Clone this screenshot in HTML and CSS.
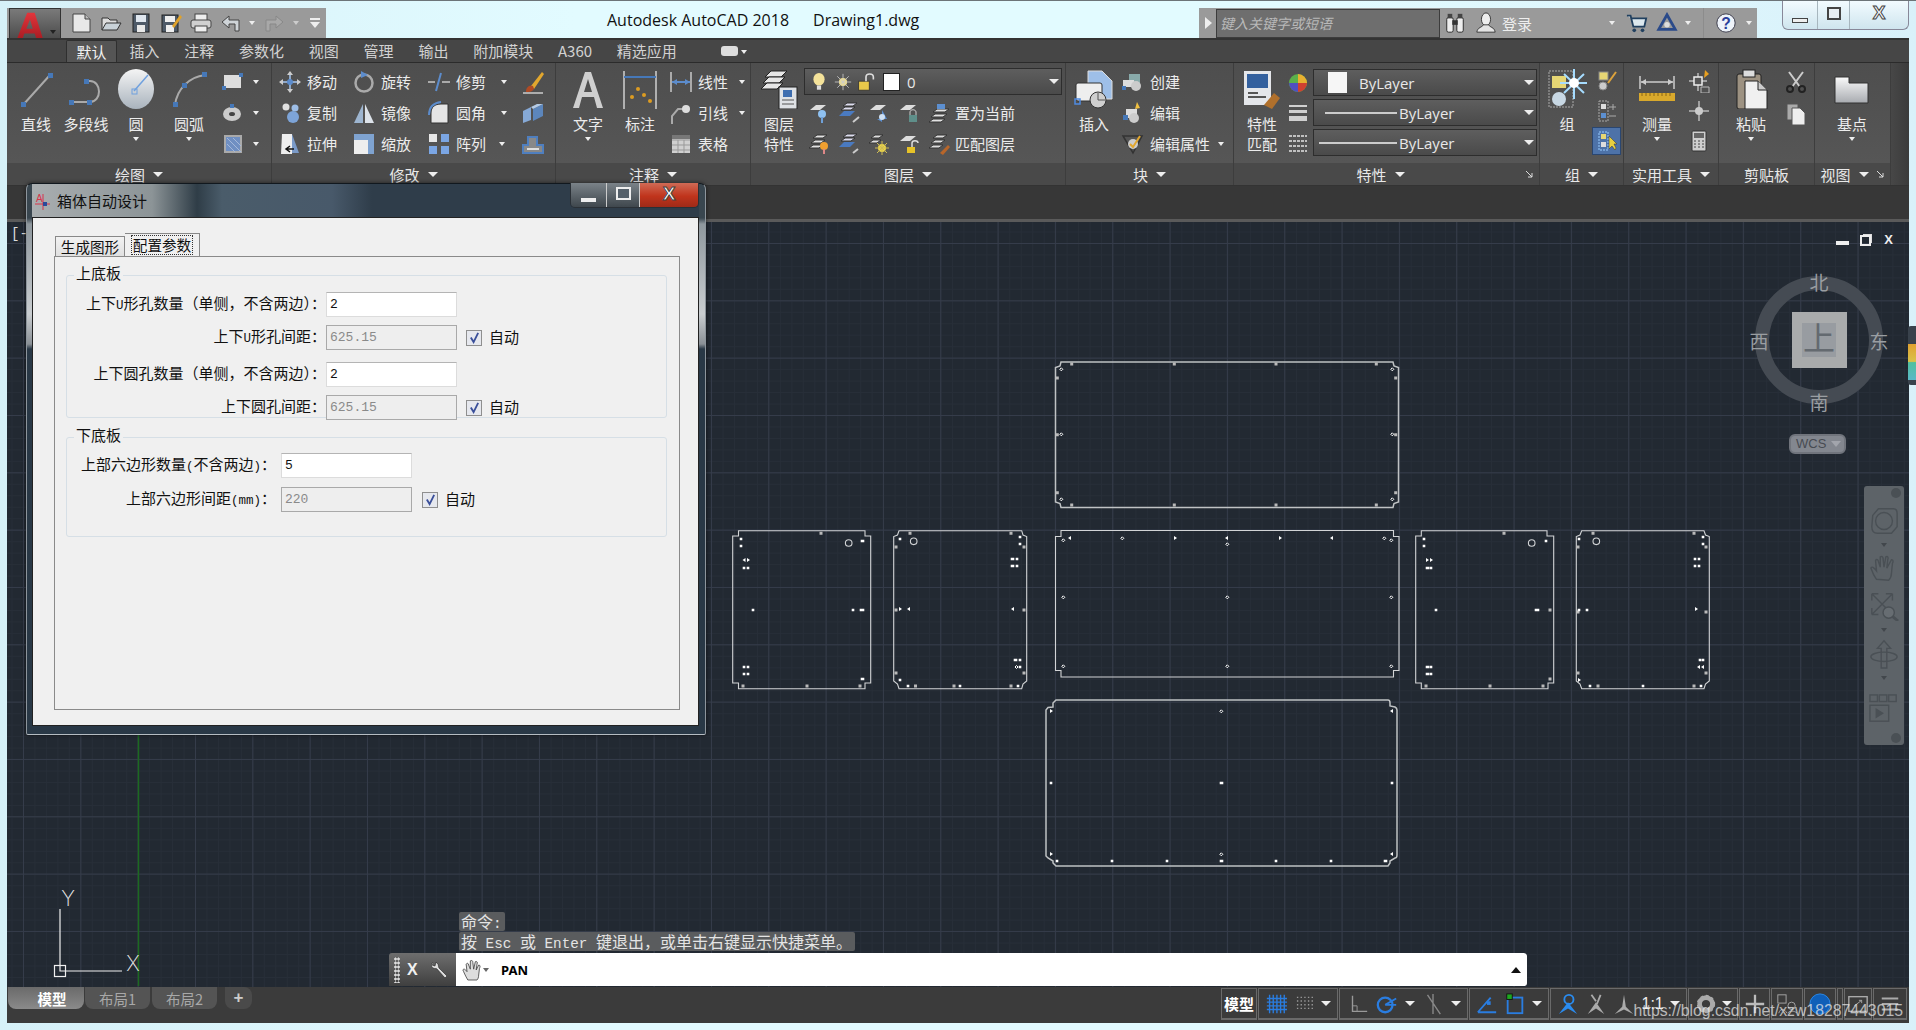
FILE: index.html
```html
<!DOCTYPE html>
<html lang="zh-CN">
<head>
<meta charset="utf-8">
<title>Autodesk AutoCAD 2018</title>
<link rel="stylesheet" href="styles.css">
</head>
<body>
<div class="window">

<header class="titlebar">
  <div class="qat">
    <div class="appbtn"><svg class="appA" viewBox="0 0 30 30"><defs><linearGradient id="ag" x1="0" y1="0" x2="0" y2="1"><stop offset="0" stop-color="#e2353c"/><stop offset="1" stop-color="#a81c22"/></linearGradient></defs><path d="M1 30 L12 2 H20 L29 30 H22 L20 24 H9 L7 30Z M11 19 H18 L15 9Z" fill="url(#ag)" fill-rule="evenodd"/></svg><i class="arr dark appArr"></i></div>
    <div class="qicons">
      <svg class="q" viewBox="0 0 22 22"><path d="M3 2H15L20 7V20H3Z" fill="#e8e8e8" stroke="#444"/><path d="M15 2V7H20" fill="#bbb" stroke="#444"/></svg>
      <svg class="q" viewBox="0 0 22 22"><path d="M2 18V6H8L10 8H17V11" fill="#ddd" stroke="#333"/><path d="M2 18L6 11H21L17 18Z" fill="#c9d2d8" stroke="#333"/></svg>
      <svg class="q" viewBox="0 0 22 22"><rect x="3" y="2" width="16" height="18" fill="#4e5a68" stroke="#222"/><rect x="6" y="3" width="10" height="7" fill="#dfe6ee"/><rect x="7" y="13" width="8" height="7" fill="#e8e8e8"/></svg>
      <svg class="q" viewBox="0 0 22 22"><rect x="2" y="3" width="16" height="17" fill="#4e5a68" stroke="#222"/><rect x="5" y="4" width="10" height="6" fill="#eee"/><rect x="6" y="13" width="8" height="7" fill="#eee"/><path d="M12 14L20 3L22 5L14 16Z" fill="#e0a22a"/></svg>
      <svg class="q" viewBox="0 0 22 22"><rect x="5" y="2" width="12" height="7" fill="#eee" stroke="#444"/><rect x="1" y="8" width="20" height="8" rx="2" fill="#d0d0d0" stroke="#444"/><rect x="5" y="14" width="12" height="6" fill="#eee" stroke="#444"/></svg>
      <svg class="q" viewBox="0 0 22 22"><path d="M9 4L2 10L9 16V12H15V19H19V8H9Z" fill="#cfd4d8" stroke="#444"/></svg>
      <i class="arr qa1"></i>
      <svg class="q qr" viewBox="0 0 22 22"><path d="M13 4L20 10L13 16V12H7V19H3V8H13Z" fill="#a8a8a8" stroke="#888"/></svg>
      <i class="arr qa2"></i>
      <svg class="qc" viewBox="0 0 12 12"><rect x="1" y="1" width="10" height="2" fill="#eee"/><path d="M1 5H11L6 11Z" fill="#eee"/></svg>
    </div>
  </div>
  <div class="wtitle"><span>Autodesk AutoCAD 2018</span><span>Drawing1.dwg</span></div>
  <div class="infocenter">
    <i class="tri-r"></i>
    <div class="search">键入关键字或短语</div>
    <svg class="ic24 m1" viewBox="0 0 24 24"><rect x="3" y="6" width="7" height="16" rx="2" fill="#eee" stroke="#222"/><rect x="14" y="6" width="7" height="16" rx="2" fill="#eee" stroke="#222"/><rect x="9" y="9" width="6" height="5" fill="#333"/><rect x="4" y="2" width="5" height="5" fill="#444"/><rect x="15" y="2" width="5" height="5" fill="#444"/></svg>
    <svg class="ic24 m2" viewBox="0 0 24 24"><ellipse cx="12" cy="8" rx="5" ry="7" fill="#eee" stroke="#333"/><path d="M2 22C3 16 8 17 9 14H15C16 17 21 16 22 22Z" fill="#e4e4e4" stroke="#333"/></svg>
    <span class="login">登录</span>
    <i class="arr a1"></i>
    <svg class="ic24 m3" viewBox="0 0 24 24"><path d="M1 4H5L8 16H20L22 7H6" fill="#dce8ee" stroke="#21405f" stroke-width="2"/><circle cx="9" cy="20" r="2" fill="#21405f"/><circle cx="18" cy="20" r="2" fill="#21405f"/></svg>
    <svg class="ic24 m4" viewBox="0 0 24 24"><path d="M12 3L21 19H3Z" fill="none" stroke="#2a4a8a" stroke-width="3"/><circle cx="12" cy="14" r="3" fill="#ddd"/></svg>
    <i class="arr a2"></i>
    <i class="isep"></i>
    <svg class="ic24 m5" viewBox="0 0 24 24"><circle cx="12" cy="12" r="10" fill="#eef3fa" stroke="#334"/><text x="12" y="18" class="helpq">?</text></svg>
    <i class="arr a3"></i>
  </div>
  <div class="wbtns">
    <div class="wb w1"><i class="wmin"></i></div>
    <div class="wb w2"><i class="wmax"></i></div>
    <div class="wb w3"><span>X</span></div>
  </div>
</header>

<div class="app">
  <nav class="tabs">
    <span class="tab on">默认</span><span class="tab">插入</span><span class="tab">注释</span><span class="tab">参数化</span><span class="tab">视图</span><span class="tab">管理</span><span class="tab">输出</span><span class="tab">附加模块</span><span class="tab">A360</span><span class="tab">精选应用</span>
    <span class="pill"><i class="arr up"></i></span><i class="arr pa"></i>
  </nav>

  <div class="ribbon">
    <section class="panel p-draw">
      <div class="pbody">
        <div class="big w50"><svg class="bi" viewBox="0 0 40 40"><path d="M7 36L34 6" stroke="#aaa" stroke-width="2"/><rect x="5" y="33" width="5" height="5" fill="#4678b8"/><rect x="32" y="4" width="5" height="5" fill="#4678b8"/></svg><span>直线</span></div>
        <div class="big w50"><svg class="bi" viewBox="0 0 40 40"><path d="M6 33H24C36 33 36 12 24 12H20" fill="none" stroke="#aaa" stroke-width="2"/><g fill="#4678b8"><rect x="3" y="31" width="5" height="5"/><rect x="21" y="31" width="5" height="5"/><rect x="18" y="10" width="5" height="5"/></g></svg><span>多段线</span></div>
        <div class="big w50"><svg class="bi" viewBox="0 0 40 40"><defs><linearGradient id="cg" x1="0" y1="0" x2="0" y2="1"><stop offset="0" stop-color="#f4f4f4"/><stop offset="1" stop-color="#a9b3bd"/></linearGradient></defs><ellipse cx="20" cy="20" rx="18" ry="20" fill="url(#cg)"/><path d="M18 22L32 6" stroke="#6fa0de" stroke-width="1.5"/><rect x="16" y="20" width="5" height="5" fill="none" stroke="#6fa0de"/></svg><span>圆</span><i class="arr"></i></div>
        <div class="big w56"><svg class="bi" viewBox="0 0 40 40"><path d="M6 36C8 20 20 8 36 6" fill="none" stroke="#aaa" stroke-width="2"/><g fill="#4678b8"><rect x="4" y="33" width="5" height="5"/><rect x="33" y="3" width="5" height="5"/><rect x="13" y="14" width="5" height="5"/></g></svg><span>圆弧</span><i class="arr"></i></div>
        <div class="col">
          <div class="tool t1"><svg class="si" viewBox="0 0 24 24"><rect x="3" y="5" width="17" height="13" fill="#ddd"/><rect x="1" y="16" width="4" height="4" fill="#4678b8"/><rect x="18" y="3" width="4" height="4" fill="#4678b8"/></svg><i class="arr ml8"></i></div>
          <div class="tool t1"><svg class="si" viewBox="0 0 24 24"><ellipse cx="11" cy="13" rx="9" ry="7" fill="#ccc"/><ellipse cx="11" cy="13" rx="3" ry="2" fill="#444"/><rect x="9" y="3" width="4" height="4" fill="#4678b8"/></svg><i class="arr ml8"></i></div>
          <div class="tool t1"><svg class="si" viewBox="0 0 24 24"><rect x="4" y="4" width="16" height="16" fill="#6f8fc2" stroke="#aaa" stroke-width="2"/><path d="M6 6L20 20M12 6L20 14M6 12L14 20" stroke="#a4b8da"/></svg><i class="arr ml8"></i></div>
        </div>
      </div>
      <div class="ptitle"><span>绘图</span><i class="arr lg"></i></div>
    </section>

    <section class="panel p-modify">
      <div class="pbody">
        <div class="col w74">
          <div class="tool"><svg class="si" viewBox="0 0 24 24"><path d="M12 2V22M2 12H22" stroke="#8fa8c8" stroke-width="2"/><circle cx="12" cy="12" r="3" fill="#5c8ccc"/><path d="M12 1L15 5H9ZM12 23L15 19H9ZM1 12L5 9V15ZM23 12L19 9V15Z" fill="#ccc"/></svg><span>移动</span></div>
          <div class="tool"><svg class="si" viewBox="0 0 24 24"><circle cx="8" cy="6" r="3.5" fill="#e0e0e0"/><circle cx="17" cy="7" r="3.5" fill="#9dbde6"/><circle cx="15" cy="16" r="6" fill="#7da4d8"/></svg><span>复制</span></div>
          <div class="tool"><svg class="si" viewBox="0 0 24 24"><path d="M4 2H14V22H3Z" fill="#eee"/><path d="M14 2L21 21H14Z" fill="#7a9ac8"/><path d="M8 17H16M12 14L8 17L12 20" stroke="#111" stroke-width="1.5" fill="none"/></svg><span>拉伸</span></div>
        </div>
        <div class="col w75">
          <div class="tool"><svg class="si" viewBox="0 0 24 24"><circle cx="12" cy="13" r="8.5" fill="none" stroke="#aaa" stroke-width="2.5"/><path d="M9 1L16 5L9 8Z" fill="#5c8ccc"/></svg><span>旋转</span></div>
          <div class="tool"><svg class="si" viewBox="0 0 24 24"><path d="M11 3V22L2 22Z" fill="#9db5d0"/><path d="M13 3V22L22 22Z" fill="#dde3ea"/></svg><span>镜像</span></div>
          <div class="tool"><svg class="si" viewBox="0 0 24 24"><rect x="2" y="2" width="20" height="20" fill="#7fa3d0"/><rect x="2" y="8" width="14" height="14" fill="#eee"/></svg><span>缩放</span></div>
        </div>
        <div class="col w94">
          <div class="tool"><svg class="si" viewBox="0 0 24 24"><path d="M1 12H8M15 12H23" stroke="#aaa" stroke-width="2"/><path d="M9 21L14 3" stroke="#5c8ccc" stroke-width="2"/></svg><span>修剪</span><i class="arr ml14"></i></div>
          <div class="tool"><svg class="si" viewBox="0 0 24 24"><path d="M4 22V12C4 6 8 3 14 3H21V22Z" fill="#e5e5e5" stroke="#333"/><path d="M2 14C2 6 6 2 14 1" fill="none" stroke="#5c8ccc" stroke-width="2"/></svg><span>圆角</span><i class="arr ml14"></i></div>
          <div class="tool"><svg class="si" viewBox="0 0 24 24"><rect x="2" y="2" width="8" height="8" fill="#e8e8e8"/><rect x="14" y="2" width="8" height="8" fill="#7ba6e4"/><rect x="2" y="14" width="8" height="8" fill="#7ba6e4"/><rect x="14" y="14" width="8" height="8" fill="#7ba6e4"/></svg><span>阵列</span><i class="arr ml10"></i></div>
        </div>
        <div class="col">
          <div class="tool"><svg class="si" viewBox="0 0 24 24"><path d="M10 16L21 2L23 4L13 19Z" fill="#e2a72e"/><path d="M5 22C5 16 9 15 12 16L13 19C11 22 8 22 5 22Z" fill="#b04a24"/><path d="M2 23H22" stroke="#ccc" stroke-width="1.5"/></svg></div>
          <div class="tool"><svg class="si" viewBox="0 0 24 24"><path d="M2 10L10 6V19L2 22Z" fill="#86a9d6"/><path d="M12 8L22 3V15L12 20Z" fill="#5c86bc"/><path d="M10 6L16 3L22 3L12 8Z" fill="#b4cbe6"/></svg></div>
          <div class="tool"><svg class="si" viewBox="0 0 24 24"><path d="M2 21V13H7V5H16V13H22V21Z" fill="#888" stroke="#4f7fbf" stroke-width="2"/><path d="M6 17H18" stroke="#ddd" stroke-width="2"/></svg></div>
        </div>
      </div>
      <div class="ptitle"><span>修改</span><i class="arr lg"></i></div>
    </section>

    <section class="panel p-anno">
      <div class="pbody">
        <div class="big w46"><svg class="bi" viewBox="0 0 40 40"><path d="M5 39L17 3H23L35 39H29L26 28H14L11 39ZM16 23H24L20 10Z" fill="#cfcfcf" fill-rule="evenodd"/></svg><span>文字</span><i class="arr"></i></div>
        <div class="big w58"><svg class="bi" viewBox="0 0 40 40"><path d="M4 2V40M36 2V40" stroke="#b0b0b0" stroke-width="2"/><path d="M4 8H36" stroke="#4678b8" stroke-width="2"/><g fill="#dd9c22"><circle cx="12" cy="28" r="2"/><circle cx="18" cy="20" r="2"/><circle cx="24" cy="26" r="2"/><circle cx="30" cy="32" r="2"/></g></svg><span>标注</span></div>
        <div class="col">
          <div class="tool"><svg class="si" viewBox="0 0 24 24"><path d="M2 2V22M22 2V22" stroke="#aaa" stroke-width="2"/><path d="M3 12H21" stroke="#5c8ccc" stroke-width="2"/><path d="M3 12L8 9V15ZM21 12L16 9V15Z" fill="#5c8ccc"/></svg><span>线性</span><i class="arr ml12"></i></div>
          <div class="tool"><svg class="si" viewBox="0 0 24 24"><path d="M3 23V15L9 8H14" fill="none" stroke="#aaa" stroke-width="2"/><circle cx="17" cy="8" r="4" fill="#ddd"/></svg><span>引线</span><i class="arr ml12"></i></div>
          <div class="tool"><svg class="si" viewBox="0 0 24 24"><rect x="3" y="3" width="18" height="18" fill="#d0d0d0"/><path d="M3 8H21M3 13H21M3 18H21M9 8V21M15 8V21" stroke="#999"/><rect x="3" y="3" width="18" height="4" fill="#777"/></svg><span>表格</span></div>
        </div>
      </div>
      <div class="ptitle"><span>注释</span><i class="arr lg"></i></div>
    </section>

    <section class="panel p-layer">
      <div class="pbody">
        <div class="big w44"><svg class="bi" viewBox="0 0 40 40"><g fill="#e6e6e6" stroke="#222"><path d="M6 8L12 2H28L22 8Z"/><path d="M4 14L10 8H26L20 14Z"/><path d="M2 20L8 14H24L18 20Z"/></g><rect x="20" y="18" width="18" height="22" fill="#dfe2e6" stroke="#222"/><rect x="24" y="21" width="9" height="7" fill="#3e6eb0"/><path d="M23 31H35M23 35H35" stroke="#555"/></svg><span>图层</span><span class="l2">特性</span></div>
        <div class="col cl">
          <div class="combo lay"><svg class="cbulb" viewBox="0 0 20 28"><ellipse cx="10" cy="10" rx="8" ry="9" fill="#f4e29a"/><rect x="7" y="19" width="6" height="6" fill="#ddd"/></svg><svg class="csun" viewBox="0 0 22 22"><circle cx="11" cy="11" r="5" fill="#f0df8c"/><path d="M11 1V21M1 11H21M4 4L18 18M18 4L4 18" stroke="#ccc"/></svg><svg class="clock" viewBox="0 0 22 24"><rect x="2" y="11" width="13" height="11" fill="#e8c84a" stroke="#333"/><path d="M11 11V6C11 1 20 1 20 6V9" fill="none" stroke="#ddd" stroke-width="2"/></svg><i class="swatch"></i><span>0</span><i class="arr big-arr"></i></div>
          <div class="irow">
            <svg class="xi" viewBox="0 0 22 22"><path d="M2 8L8 3H18L12 8Z" fill="#ddd"/><circle cx="14" cy="12" r="4" fill="#8ec0f0"/><path d="M14 15V21" stroke="#6fa0d8" stroke-width="2"/></svg>
            <svg class="xi" viewBox="0 0 22 22"><g fill="#dde" stroke="#333"><path d="M5 4L9 1H19L15 4Z"/><path d="M3 8L7 5H17L13 8Z"/></g><path d="M1 14L6 9H17L12 14Z" fill="#4a7ac0"/><path d="M15 20L21 15" stroke="#ccc" stroke-width="2"/></svg>
            <svg class="xi" viewBox="0 0 22 22"><path d="M2 8L8 3H18L12 8Z" fill="#ddd"/><path d="M14 8L19 17H9L14 20" fill="#5c8fd0"/><circle cx="14" cy="15" r="3" fill="#cfe0f2"/></svg>
            <svg class="xi" viewBox="0 0 22 22"><path d="M2 8L8 3H18L12 8Z" fill="#ddd"/><rect x="11" y="13" width="8" height="7" fill="#5f8f8a"/><path d="M12 13V10C12 7 18 7 18 10V13" fill="none" stroke="#ccc"/></svg>
            <svg class="xi" viewBox="0 0 22 22"><g fill="#e2e2e2" stroke="#333"><path d="M5 10L9 7H21L17 10Z"/><path d="M3 15L7 12H19L15 15Z"/><path d="M1 20L5 17H17L13 20Z"/></g><rect x="9" y="2" width="8" height="5" fill="#5c8fd0"/></svg>
            <span>置为当前</span>
          </div>
          <div class="irow">
            <svg class="xi" viewBox="0 0 22 22"><g fill="#e2e2e2" stroke="#333"><path d="M5 5L9 2H19L15 5Z"/><path d="M3 10L7 7H17L13 10Z"/><path d="M1 15L5 12H15L11 15Z"/></g><circle cx="16" cy="13" r="4" fill="#f0a030"/><path d="M16 16V21" stroke="#d88" stroke-width="2"/></svg>
            <svg class="xi" viewBox="0 0 22 22"><g fill="#dde" stroke="#333"><path d="M5 4L9 1H19L15 4Z"/><path d="M3 8L7 5H17L13 8Z"/></g><path d="M1 14L6 9H17L12 14Z" fill="#4a7ac0"/><path d="M15 20L20 16" stroke="#ccc" stroke-width="2"/></svg>
            <svg class="xi" viewBox="0 0 22 22"><g fill="#ddd" stroke="#333"><path d="M3 5L7 2H15L11 5Z"/><path d="M1 10L5 7H13L9 10Z"/></g><circle cx="14" cy="15" r="4" fill="#f0d848"/><path d="M14 8V22M7 15H21M9 10L19 20M19 10L9 20" stroke="#cdbb55"/></svg>
            <svg class="xi" viewBox="0 0 22 22"><path d="M2 8L8 3H18L12 8Z" fill="#ddd"/><rect x="9" y="14" width="8" height="6" fill="#e6c228"/><path d="M14 14V10C14 7 20 7 20 10" fill="none" stroke="#ddd" stroke-width="1.5"/></svg>
            <svg class="xi" viewBox="0 0 22 22"><g fill="#ddd" stroke="#333"><path d="M5 5L9 2H19L15 5Z"/><path d="M3 10L7 7H17L13 10Z"/><path d="M1 15L5 12H15L11 15Z"/></g><path d="M12 20L20 12L22 14L15 22Z" fill="#b8662a"/></svg>
            <span>匹配图层</span>
          </div>
        </div>
      </div>
      <div class="ptitle"><span>图层</span><i class="arr lg"></i></div>
    </section>

    <section class="panel p-block">
      <div class="pbody">
        <div class="big w48"><svg class="bi" viewBox="0 0 40 40"><path d="M14 2H28L38 12V30H14Z" fill="#9ebfe8" stroke="#ddd"/><rect x="2" y="14" width="26" height="18" rx="2" fill="#eee" stroke="#333"/><circle cx="24" cy="31" r="8" fill="#cfcfcf" stroke="#333"/><path d="M24 24V31H31" stroke="#555" fill="none"/><rect x="1" y="30" width="5" height="5" fill="none" stroke="#4f8ae0" stroke-width="1.5"/></svg><span>插入</span></div>
        <div class="col cb">
          <div class="tool"><svg class="si" viewBox="0 0 24 24"><rect x="9" y="4" width="11" height="9" fill="#8aa"/><rect x="3" y="10" width="11" height="7" fill="#ddd"/><circle cx="16" cy="16" r="5" fill="#ccc"/><rect x="2" y="16" width="4" height="4" fill="#4678b8"/></svg><span>创建</span></div>
          <div class="tool"><svg class="si" viewBox="0 0 24 24"><rect x="6" y="8" width="11" height="9" fill="#ddd"/><circle cx="14" cy="17" r="5" fill="#ccc"/><rect x="3" y="14" width="5" height="5" fill="#4678b8"/><path d="M17 1L20 7L15 8Z" fill="#f0c040"/></svg><span>编辑</span></div>
          <div class="tool"><svg class="si" viewBox="0 0 24 24"><path d="M3 4H22L13 21Z" fill="none" stroke="#333" stroke-width="1.5"/><circle cx="13" cy="12" r="5" fill="#ccc"/><path d="M10 12L13 15L20 4" fill="none" stroke="#e2a72e" stroke-width="2"/></svg><span>编辑属性</span><i class="arr ml8"></i></div>
        </div>
      </div>
      <div class="ptitle"><span>块</span><i class="arr lg"></i></div>
    </section>

    <section class="panel p-prop">
      <div class="pbody">
        <div class="big w46"><svg class="bi" viewBox="0 0 40 40"><rect x="2" y="2" width="27" height="34" fill="#e4e6ea"/><rect x="5" y="5" width="21" height="14" fill="#33609e"/><path d="M6 24H16M6 28H24" stroke="#555" stroke-width="2"/><path d="M22 36L32 24L38 29L30 40Z" fill="#b0702c"/></svg><span>特性</span><span class="l2">匹配</span></div>
        <div class="col cp">
          <div class="prow"><svg class="pi" viewBox="0 0 22 22"><circle cx="11" cy="11" r="9" fill="#5bb04a"/><path d="M11 11V2A9 9 0 0 1 20 11Z" fill="#e8b030"/><path d="M11 11H20A9 9 0 0 1 11 20Z" fill="#d04030"/><path d="M11 11V20A9 9 0 0 1 2 11Z" fill="#5050c0"/></svg><div class="combo pc"><i class="swatch lg"></i><span>ByLayer</span><i class="arr big-arr"></i></div></div>
          <div class="prow"><svg class="pi" viewBox="0 0 22 22"><g fill="#d0d0d0"><rect x="2" y="3" width="18" height="2"/><rect x="2" y="8" width="18" height="3"/><rect x="2" y="14" width="18" height="5"/></g></svg><div class="combo pc"><i class="ln w74l"></i><span>ByLayer</span><i class="arr big-arr"></i></div></div>
          <div class="prow"><svg class="pi" viewBox="0 0 22 22"><path d="M2 4H20M2 9H20M2 14H20M2 19H20" stroke="#c0c0c0" stroke-width="2" stroke-dasharray="3 1"/></svg><div class="combo pc"><i class="ln w80l"></i><span>ByLayer</span><i class="arr big-arr"></i></div></div>
        </div>
      </div>
      <div class="ptitle tcorner tprop"><span>特性</span><i class="arr lg"></i><svg class="corner" viewBox="0 0 8 8"><path d="M1 1L7 7M7 3V7H3" fill="none" stroke="#ddd"/></svg></div>
    </section>

    <section class="panel p-group">
      <div class="pbody">
        <div class="big w50"><svg class="bi" viewBox="0 0 40 40"><rect x="2" y="2" width="24" height="36" fill="none" stroke="#aaa" stroke-dasharray="2 1"/><rect x="5" y="7" width="14" height="12" fill="#e6d674"/><circle cx="12" cy="30" r="7" fill="#c8d8e4"/><path d="M27 0V30M13 14H40M17 5L37 24M37 5L17 24" stroke="#a6dcff" stroke-width="2"/><circle cx="27" cy="14" r="5" fill="#fff"/></svg><span>组</span></div>
        <div class="col cg">
          <div class="gbtn"><svg class="si" viewBox="0 0 24 24"><rect x="4" y="3" width="9" height="8" fill="#e6d674" stroke="#888"/><circle cx="8" cy="17" r="4" fill="#ccc" stroke="#888"/><path d="M13 14L21 3" stroke="#dda33c" stroke-width="2"/></svg></div>
          <div class="gbtn"><svg class="si" viewBox="0 0 24 24"><rect x="4" y="2" width="9" height="20" fill="none" stroke="#aaa" stroke-dasharray="2 1"/><rect x="6" y="5" width="5" height="5" fill="#ddd"/><rect x="6" y="14" width="5" height="5" fill="#5c8fd0"/><path d="M14 8H21M18 5V11M14 17H21" stroke="#aaa"/></svg></div>
          <div class="gbtn active"><svg class="si" viewBox="0 0 24 24"><rect x="4" y="3" width="9" height="18" fill="none" stroke="#9cf" stroke-dasharray="2 1"/><rect x="6" y="5" width="5" height="5" fill="#e6d674"/><rect x="6" y="13" width="5" height="5" fill="#ddd"/><path d="M14 7V20L17 17L20 21L21 19L19 15H22Z" fill="#e8d040" stroke="#333" stroke-width=".5"/></svg></div>
        </div>
      </div>
      <div class="ptitle"><span>组</span><i class="arr lg"></i></div>
    </section>

    <section class="panel p-util">
      <div class="pbody">
        <div class="big w56"><svg class="bi" viewBox="0 0 40 40"><path d="M3 7V20M37 7V20M4 13H36" stroke="#ccc" stroke-width="1.5"/><path d="M4 13L9 10V16ZM36 13L31 10V16Z" fill="#ccc"/><rect x="2" y="24" width="36" height="8" fill="#d9a92c"/><path d="M5 24v3M9 24v3M13 24v3M17 24v3M21 24v3M25 24v3M29 24v3M33 24v3" stroke="#8a6614"/></svg><span>测量</span><i class="arr"></i></div>
        <div class="col cu">
          <div class="gbtn gu"><svg class="si" viewBox="0 0 24 24"><path d="M2 12H20M11 4V22" stroke="#bbb" stroke-width="1.5"/><rect x="7" y="8" width="8" height="8" fill="#555" stroke="#eee" stroke-width="1.5"/><path d="M18 1L22 5L17 9Z" fill="#e8a020"/><path d="M14 18H22V24H14Z" fill="none" stroke="#bbb"/></svg></div>
          <div class="gbtn gu"><svg class="si" viewBox="0 0 24 24"><path d="M12 2V22M2 12H22" stroke="#bbb" stroke-width="1.5"/><circle cx="12" cy="12" r="4" fill="#ccc"/></svg></div>
          <div class="gbtn gu"><svg class="si" viewBox="0 0 24 24"><rect x="5" y="2" width="14" height="20" rx="1" fill="#cfcfcf" stroke="#333"/><rect x="7" y="4" width="10" height="5" fill="#666"/><path d="M7 12h2M11 12h2M15 12h2M7 15h2M11 15h2M15 15h2M7 18h2M11 18h2M15 18h2" stroke="#444"/></svg></div>
        </div>
      </div>
      <div class="ptitle"><span>实用工具</span><i class="arr lg"></i></div>
    </section>

    <section class="panel p-clip">
      <div class="pbody">
        <div class="big w56"><svg class="bi" viewBox="0 0 40 40"><rect x="6" y="5" width="24" height="35" rx="2" fill="#9d9282" stroke="#222"/><rect x="12" y="1" width="12" height="7" fill="#ddd" stroke="#222"/><path d="M14 12H27L36 21V40H14Z" fill="#f0f0f0" stroke="#222"/><path d="M27 12V21H36" fill="#ccc" stroke="#222"/></svg><span>粘贴</span><i class="arr"></i></div>
        <div class="col cc">
          <div class="gbtn gc"><svg class="si" viewBox="0 0 24 24"><path d="M5 2L16 17M19 2L8 17" stroke="#ccc" stroke-width="2"/><circle cx="6" cy="19" r="3" fill="none" stroke="#222" stroke-width="2"/><circle cx="18" cy="19" r="3" fill="none" stroke="#222" stroke-width="2"/></svg></div>
          <div class="gbtn gc"><svg class="si" viewBox="0 0 24 24"><rect x="3" y="2" width="11" height="16" fill="#aaa" stroke="#555"/><path d="M8 6H16L21 11V23H8Z" fill="#eee" stroke="#555"/></svg></div>
        </div>
      </div>
      <div class="ptitle"><span>剪贴板</span></div>
    </section>

    <section class="panel p-view">
      <div class="pbody">
        <div class="big w74"><svg class="bi" viewBox="0 0 40 40"><defs><linearGradient id="vg" x1="0" y1="0" x2="0" y2="1"><stop offset="0" stop-color="#fafafa"/><stop offset="1" stop-color="#a8abb0"/></linearGradient></defs><path d="M3 8H17V14H36V34H3Z" fill="url(#vg)" stroke="#333"/></svg><span>基点</span><i class="arr"></i></div>
      </div>
      <div class="ptitle tcorner tview"><span>视图</span><i class="arr lg"></i><svg class="corner" viewBox="0 0 8 8"><path d="M1 1L7 7M7 3V7H3" fill="none" stroke="#ddd"/></svg></div>
    </section>
    <div class="rfill"></div>
  </div>

  <div class="docstrip"></div>

  <main class="canvas">
    <span class="vpctl">[-</span>
    <div class="vpbtns"><i class="vmin"></i><i class="vmax"></i><span class="vx">X</span></div>

    <svg class="drawing" viewBox="7 222 1902 764" aria-hidden="true">
      <path d="M138.500 733V986" stroke="#1c6a20" stroke-width="1.500"/>
      <g class="ucs"><rect x="54.500" y="965.500" width="11" height="11"/><path d="M60 909V971H122"/></g>
      <text class="ucst" x="68" y="906">Y</text>
      <text class="ucst" x="133" y="971">X</text>
      <g class="shp">
        <path class="thick" d="M1061 362H1393L1394 366L1398.500 367.500V502L1394 503.500L1393 507.500H1061L1060 503.500L1055.500 502V367.500L1060 366Z"/>
        <path d="M1061 530.500H1393.500V536.500H1399V670.500H1393.500V677H1061V670.500H1055.500V536.500H1061Z"/>
        <path class="thick" d="M1056 700H1388Q1390 700 1390 703V706L1395 707Q1397 708 1397 710V855Q1397 858 1395 858L1390 861V863L1388 866H1056L1053 863V861L1048 858L1046 856V710L1048 707.500L1053 707V703Z"/>
        <path d="M738.500 530.700H865V536H870.700V683H865V688.700H738.500V683H732.700V536H738.500Z"/>
        <path d="M899 530.700H1021.700L1023 535L1026.700 536.500V681L1023 684L1021.700 688.700H899L897.500 684L893.700 681V536.500L897.500 535Z"/>
        <path d="M1421.300 530.700H1547V536H1553.700V683H1548V688.700H1421.300V683H1415.700V536H1421.300Z"/>
        <path d="M1581.700 530.700H1704L1705.500 535L1709.300 536.500V681L1705.500 684L1704 688.700H1581.700L1580 684L1576.300 681V536.500L1580 535Z"/>
        <circle cx="848.700" cy="543" r="3.300"/><circle cx="913.700" cy="541.300" r="3.300"/><circle cx="1531.700" cy="543" r="3.300"/><circle cx="1596.300" cy="541.300" r="3.300"/>
      </g>
      <path class="gdots" d="M1071.700 364h.01M1174.300 364h.01M1276 364h.01M1376.300 364h.01M1071.700 505h.01M1174.300 505h.01M1276 505h.01M1376.300 505h.01M1057.300 378h.01M1395.700 378h.01M1057.300 434.700h.01M1395.700 434.700h.01M1057.300 492.700h.01M1395.700 492.700h.01M821 533.300h.01M743 686h.01M807 686h.01M860 686h.01M910 533.300h.01M1011 533.300h.01M1024 547h.01M896 547h.01M896 610h.01M1024 610h.01M896 673h.01M1024 673h.01M915.500 686h.01M954 686h.01M1011 686h.01M1504 533.300h.01M1550 610h.01M1550 679h.01M1426 686h.01M1490 686h.01M1543 686h.01M1593 533.300h.01M1694 533.300h.01M1706 547h.01M1578 547h.01M1578 612h.01M1706 612h.01M1578 673h.01M1706 673h.01M1598 686h.01M1694 686h.01"/>
      <path class="wdots" d="M1051 783h.01M1221 783h1M1392 783h.01M1057 861h.01M1112 861h.01M1167 861h.01M1221 861h1M1276 861h.01M1331 861h.01M1385 861h1M741 539h.01M741 546h.01M862 541h1M744 568h.01M748 568h.01M753 610h.01M853 610h.01M861 610h2M744 667h.01M748 667h.01M744 674h.01M748 674h.01M862 679h1M900 539h.01M1020 537h.01M1020 544h.01M1012 559h1M1017 559h.01M1012 566h1M1017 566h.01M1015 660h1M1020 660h.01M1020 667h.01M900 680h.01M908 686h.01M960 686h.01M1018 686h.01M1424 539h.01M1424 546h.01M1546 541h.01M1427 568h1M1431 568h.01M1436 610h.01M1536 610h2M1427 667h1M1431 667h.01M1427 674h1M1431 674h.01M1579 539h.01M1703 537h.01M1703 544h.01M1695 559h.01M1699 559h.01M1695 566h.01M1699 566h.01M1579 610h.01M1587 610h.01M1700 660h.01M1703 660h.01M1590 686h.01M1643 686h.01M1701 686h.01"/>
      <path class="dia" d="M1061.300 367.800l1.500 1.500-1.500 1.500-1.500-1.500zM1392.300 367.800l1.500 1.500-1.500 1.500-1.500-1.500zM1061.300 432.800l1.500 1.500-1.500 1.500-1.500-1.500zM1392.300 432.800l1.500 1.500-1.500 1.500-1.500-1.500zM1061.300 497.800l1.500 1.500-1.500 1.500-1.500-1.500zM1392.300 497.800l1.500 1.500-1.500 1.500-1.500-1.500zM1063.300 538.800l1.500 1.500-1.500 1.500-1.500-1.500zM1391.300 538.800l1.500 1.500-1.500 1.500-1.500-1.500zM1063.300 595.800l1.500 1.500-1.500 1.500-1.500-1.500zM1227.300 595.800l1.500 1.500-1.500 1.500-1.500-1.500zM1391.300 595.800l1.500 1.500-1.500 1.500-1.500-1.500zM1063.300 664.800l1.500 1.500-1.500 1.500-1.500-1.500zM1227.300 664.800l1.500 1.500-1.500 1.500-1.500-1.500zM1391.300 664.800l1.500 1.500-1.500 1.500-1.500-1.500zM1227.300 542.800l1.500 1.500-1.500 1.500-1.500-1.500zM1122.300 536.800l1.500 1.500-1.500 1.500-1.500-1.500zM1384.300 536.800l1.500 1.500-1.500 1.500-1.500-1.500zM1221.300 709.800l1.500 1.500-1.500 1.500-1.500-1.500zM1221.300 852.800l1.500 1.500-1.500 1.500-1.500-1.500zM1016.500 665.500l1.500 1.500-1.500 1.500-1.500-1.500z"/>
      <path class="tri" d="M1071 536v4l-3-2zM1174 536v4l3-2zM1228 536v4l-3-2zM1279 536v4l3-2zM1333 536v4l-3-2zM1050 709v4l3-2zM1393 709v4l-3-2zM1050 852v4l3-2zM1393 852v4l-3-2zM745.500 558v4l-3-2zM747 558v4l3-2zM899 607v4l3-2zM910 607v4l-3-2zM1014 607v4l-3-2zM1426 558v4l3-2zM1430 558v4l3-2zM1695 607v4l3-2zM1700 665v4l-3-2zM1704 665v4l-3-2zM1578 678v4l3-2z"/>
    </svg>

    <svg class="viewcube" viewBox="0 -10 150 180">
      <circle class="vring" cx="75" cy="68" r="57"/>
      <rect class="vface" x="48" y="40" width="55" height="56"/>
      <rect class="vinner" x="58" y="51" width="34" height="34"/>
      <text class="vtop" x="75" y="78">上</text>
      <text class="vdir" x="75" y="18">北</text>
      <text class="vdir" x="75" y="138">南</text>
      <text class="vdir" x="15" y="77">西</text>
      <text class="vdir" x="135" y="77">东</text>
    </svg>
    <div class="wcs"><span>WCS</span><i class="wcsa"></i></div>

    <aside class="navbar">
      <i class="navx"></i>
      <svg class="nv n1" viewBox="0 0 32 32"><path d="M4 10L10 3H26C29 3 30 5 30 8V22L24 29H9C5 29 3 26 3 22Z" fill="none" stroke="#4a5055" stroke-width="1.500"/><circle cx="16" cy="16" r="9" fill="none" stroke="#4a5055" stroke-width="1.500"/></svg>
      <i class="narr"></i>
      <svg class="nv n2" viewBox="0 0 32 32"><path d="M8 27C5 23 3 18 2 15C3 13 5 14 8 18L7 7C8 5 10 6 10 8L12 14L12 3C14 2 15 3 15 5L16 14L18 3C20 2 21 4 20 6L19 15L24 6C26 6 26 8 25 10L24 20C24 23 23 26 21 28Z" fill="none" stroke="#4a5055" stroke-width="1.500"/></svg>
      <svg class="nv n3" viewBox="0 0 32 32"><path d="M3 3L25 25M25 3L3 25M3 3H10M3 3V10M25 3H18M25 3V10M3 25H10M3 25V18" fill="none" stroke="#4a5055" stroke-width="1.500"/><circle cx="21" cy="23" r="6" fill="#676d72" stroke="#4a5055" stroke-width="1.500"/><path d="M25 27L31 32" stroke="#4a5055" stroke-width="3"/></svg>
      <i class="narr"></i>
      <svg class="nv n4" viewBox="0 0 32 32"><path d="M13 31V10H9L16 2L23 10H19V31Z" fill="none" stroke="#4a5055" stroke-width="1.500"/><ellipse cx="16" cy="19" rx="14" ry="5" fill="none" stroke="#4a5055" stroke-width="1.500"/></svg>
      <i class="narr"></i>
      <svg class="nv n5" viewBox="0 0 32 32"><g fill="none" stroke="#4a5055" stroke-width="1.500"><rect x="1" y="1" width="8" height="7"/><rect x="11" y="1" width="8" height="7"/><rect x="21" y="1" width="8" height="7"/><rect x="1" y="12" width="20" height="17"/></g><path d="M7 15L16 20.500L7 26Z" fill="#4a5055"/></svg>
      <i class="navd"></i>
    </aside>

    <div class="cmdhist">
      <div class="ch1">命令<span class="mono">:</span></div>
      <div class="ch2">按<span class="mono"> Esc </span>或<span class="mono"> Enter </span>键退出，或单击右键显示快捷菜单。</div>
    </div>
    <div class="cmdbar">
      <div class="cmdh">
        <i class="grip"></i>
        <span class="cx">X</span>
        <svg class="wr" viewBox="0 0 20 20"><path d="M4 2C2 4 2 7 4 8C6 9 7 8 8 9L16 18L18 16L10 8C9 6 10 5 8 3L7 2L6 6L3 5" fill="#ddd" stroke="#222" stroke-width=".6"/></svg>
      </div>
      <div class="cmdi">
        <svg class="hand" viewBox="0 0 24 26"><path d="M7 25C4 20 2 15 1 13C2 11 4 12 6 15L5 6C6 4 8 5 8 7L10 12L10 2C12 1 13 2 13 4L14 12L16 3C18 2 19 4 18 6L17 13L20 7C22 7 22 9 21 11L20 19C20 22 19 24 18 25Z" fill="#ddd" stroke="#444"/></svg>
        <i class="arr hd"></i>
        <span class="pan">PAN</span>
        <i class="cup"></i>
      </div>
    </div>
  </main>

  <footer class="statusbar">
    <div class="ltabs">
      <span class="lt act">模型</span><span class="lt">布局1</span><span class="lt">布局2</span><span class="lt plus">+</span>
    </div>
    <div class="stat">
      <div class="sb s36"><b class="model">模型</b></div>
      <div class="sb s80">
        <svg class="st" viewBox="0 0 24 24"><path d="M5 2V22M9 2V22M13 2V22M17 2V22M21 2V22M2 6H24M2 10H24M2 14H24M2 18H24" stroke="#2a7de0" stroke-width="1.500"/></svg>
        <svg class="st" viewBox="0 0 24 24"><path d="M5 4V20M9 4V20M13 4V20M17 4V20M21 4V20" stroke="#999" stroke-width="1.500" stroke-dasharray="1.500 2.500"/></svg>
        <i class="arr lg"></i>
      </div>
      <div class="sb s129">
        <svg class="st" viewBox="0 0 24 24"><path d="M6 3V20H22" fill="none" stroke="#999" stroke-width="1.500"/><path d="M6 14H11V20" fill="none" stroke="#999"/></svg>
        <svg class="st" viewBox="0 0 24 24"><circle cx="10" cy="13" r="8" fill="none" stroke="#2a7de0" stroke-width="2.500"/><path d="M10 13L22 6M10 13H22" stroke="#2a7de0" stroke-width="2"/></svg>
        <i class="arr lg"></i>
        <svg class="st" viewBox="0 0 24 24"><path d="M6 2L20 23M12 1V23" stroke="#888" stroke-width="1.500"/></svg>
        <i class="arr lg"></i>
      </div>
      <div class="sb s80">
        <svg class="st" viewBox="0 0 24 24"><path d="M2 21H22M2 21L16 5" fill="none" stroke="#2a7de0" stroke-width="2"/><rect x="12" y="9" width="4" height="4" fill="#2a7de0"/></svg>
        <svg class="st" viewBox="0 0 24 24"><rect x="4" y="5" width="16" height="17" fill="none" stroke="#2a7de0" stroke-width="2"/><rect x="3" y="1" width="6" height="6" fill="#1ea81e" stroke="#111"/></svg>
        <i class="arr lg"></i>
      </div>
      <div class="sb s137">
        <svg class="st" viewBox="0 0 24 24"><circle cx="13" cy="7" r="5" fill="none" stroke="#2a8cf0" stroke-width="2"/><path d="M12 10L2 23L12 17L22 23Z" fill="#2a8cf0"/></svg>
        <svg class="st" viewBox="0 0 24 24"><path d="M12 10L3 23L12 17L21 23Z" fill="#aaa"/><path d="M7 2L12 9M17 2L13 12" stroke="#aaa" stroke-width="2"/></svg>
        <svg class="st" viewBox="0 0 24 24"><path d="M12 2L14 15L22 23L12 18L2 23L10 15Z" fill="#aaa"/></svg>
        <span class="scale">1:1</span>
        <i class="arr lg"></i>
      </div>
      <div class="sb s50">
        <svg class="st" viewBox="0 0 24 24"><circle cx="12" cy="12" r="7" fill="none" stroke="#aaa" stroke-width="5"/><circle cx="12" cy="12" r="9" fill="none" stroke="#aaa" stroke-width="2" stroke-dasharray="3 3"/></svg>
        <i class="arr lg"></i>
      </div>
      <div class="sb s31"><svg class="st" viewBox="0 0 24 24"><path d="M12 2V22M2 12H22" stroke="#bbb" stroke-width="2.500"/></svg></div>
      <div class="sb s32"><svg class="st" viewBox="0 0 24 24"><rect x="2" y="2" width="9" height="9" fill="none" stroke="#aaa"/><circle cx="17" cy="14" r="4" fill="none" stroke="#aaa"/><path d="M3 22C5 16 9 17 12 22M13 22C14 19 20 19 23 22" fill="none" stroke="#aaa"/></svg></div>
      <div class="sb s32"><svg class="st" viewBox="0 0 24 24"><circle cx="12" cy="12" r="11" fill="#0f5fb8" stroke="#2a8cf0"/></svg></div>
      <div class="sb s6"></div>
      <div class="sb s28"><svg class="st" viewBox="0 0 24 24"><rect x="2" y="4" width="20" height="16" fill="none" stroke="#aaa" stroke-width="1.500"/><path d="M8 14L16 8M13 8H16V11" stroke="#aaa" fill="none"/></svg></div>
      <div class="sb s34"><svg class="st" viewBox="0 0 24 24"><path d="M3 6H21M3 12H21M3 18H21" stroke="#aaa" stroke-width="2"/></svg></div>
    </div>
    <div class="watermark">https://blog.csdn.net/xzw18287443015</div>
  </footer>

  <section class="dialog">
    <div class="dtitle">
      <svg class="dlogo" viewBox="0 0 18 18"><path d="M1 12H16M9 2V18" stroke="#d8344a" stroke-width="1"/><text x="2" y="10" class="dA">A</text><rect x="9" y="10" width="4" height="4" fill="#2a4a9a"/></svg>
      <span class="dname">箱体自动设计</span>
      <div class="dbtns">
        <div class="db d1"><i></i></div>
        <div class="db d2"><i></i></div>
        <div class="db d3"><span>X</span></div>
      </div>
    </div>
    <div class="dclient">
      <div class="dtabs"><span class="dtab">生成图形</span><span class="dtab cur"><em>配置参数</em></span></div>
      <div class="dpane">
        <div class="group g1">
          <span class="legend">上底板</span>
          <div class="frow r33"><label class="fl l254">上下<span class="asc">U</span>形孔数量（单侧，不含两边）：</label><div class="field">2</div></div>
          <div class="frow r37"><label class="fl l254">上下<span class="asc">U</span>形孔间距：</label><div class="field off">625.15</div><div class="chk"><i class="box"><svg viewBox="0 0 12 14"><path d="M2 7L5 12L10 2" fill="none" stroke="#3a4f9a" stroke-width="2"/></svg></i><span>自动</span></div></div>
          <div class="frow r33"><label class="fl l254">上下圆孔数量（单侧，不含两边）：</label><div class="field">2</div></div>
          <div class="frow"><label class="fl l254">上下圆孔间距：</label><div class="field off">625.15</div><div class="chk"><i class="box"><svg viewBox="0 0 12 14"><path d="M2 7L5 12L10 2" fill="none" stroke="#3a4f9a" stroke-width="2"/></svg></i><span>自动</span></div></div>
        </div>
        <div class="group g2">
          <span class="legend">下底板</span>
          <div class="frow r34"><label class="fl l204">上部六边形数量<span class="asc">(</span>不含两边<span class="asc">)</span>：</label><div class="field">5</div></div>
          <div class="frow"><label class="fl l204">上部六边形间距<span class="asc">(mm)</span>：</label><div class="field off">220</div><div class="chk c2"><i class="box"><svg viewBox="0 0 12 14"><path d="M2 7L5 12L10 2" fill="none" stroke="#3a4f9a" stroke-width="2"/></svg></i><span>自动</span></div></div>
        </div>
      </div>
    </div>
  </section>
</div>
<i class="rwidget"></i>
</div>
</body>
</html>
```

FILE: styles.css
```css
*{box-sizing:border-box}
html,body{margin:0;padding:0;width:1916px;height:1030px;overflow:hidden}
body{font-family:"Noto Sans CJK SC","Open Sans",sans-serif;color:#e8e8e8;background:#dff8fd}
i,em{font-style:normal;display:block}
svg{display:block;flex:none}
.window{position:relative;width:1916px;height:1030px;border-top:1px solid #6c7478;background:linear-gradient(90deg,#d6f1f8,#e2fbff 30%,#e2fbff 70%,#d9f1fa);overflow:hidden}

/* title bar */
.titlebar{display:flex;align-items:flex-start;height:37px;padding:0 7px;color:#111}
.qat{display:flex;width:319px;height:30px;margin-top:7px;background:#9a9a9a}
.appbtn{position:relative;width:52px;height:30px;margin-left:2px;background:linear-gradient(#7a7a7a,#4d4d4d);border:1px solid #333;border-bottom:0;overflow:hidden}
.appA{width:30px;height:28px;margin:2px 0 0 5px}
.appArr{position:absolute;right:4px;bottom:4px}
.qicons{display:flex;align-items:center;padding-left:9px;height:30px}
.q{width:22px;height:22px;margin-right:8px}
.qa1{margin:0 8px 0 -1px}
.qr{margin-right:8px}
.qa2{margin:0 10px 0 0;opacity:.6}
.qc{width:12px;height:12px}
.arr{width:0;height:0;border:3.5px solid transparent;border-top:4px solid #eee;border-bottom:0;flex:none}
.arr.lg{border-width:5px 5px 0;border-color:#eee transparent transparent}
.arr.dark{border-top-color:#222}
.wtitle{display:flex;gap:24px;margin-left:281px;font:16px/38px "Open Sans","Liberation Sans",sans-serif;color:#111}
.infocenter{display:flex;align-items:center;width:558px;height:30px;margin:7px 0 0 auto;background:#9a9a9a;color:#eee}
.tri-r{width:0;height:0;margin-left:6px;border:6px solid transparent;border-left:7px solid #eee;border-right:0}
.search{width:224px;height:29px;margin-left:4px;padding-left:3px;background:#6e6e6e;border:1px solid #3c3c3c;font:italic 14px/26px "Noto Sans CJK SC",sans-serif;color:#b9b9b9}
.ic24{width:22px;height:22px}
.m1{margin-left:4px}.m2{margin-left:9px}
.login{margin-left:5px;font-size:15px}
.a1{margin-left:77px}
.m3{margin-left:11px}.m4{margin-left:8px}
.a2{margin-left:7px}
.isep{width:1px;height:30px;margin-left:12px;background:#8c8c8c}
.m5{margin-left:11px}
.a3{margin-left:9px}
.helpq{font:bold 17px "Liberation Sans",sans-serif;fill:#2a3f9a;text-anchor:middle}
.wbtns{display:flex;width:127px;height:29px;margin:0 0 0 25px;border:1px solid #889;border-top:0;border-radius:0 0 6px 6px;background:linear-gradient(#f2fbff,#cfe5ee)}
.wb{display:flex;align-items:center;justify-content:center;height:100%;border-right:1px solid #a7b6be}
.w1{width:35px}.w2{width:32px}.w3{flex:1;border:0}
.wmin{width:16px;height:5px;margin-top:10px;background:#eee;border:1px solid #444}
.wmax{width:14px;height:13px;margin-top:-4px;border:2px solid #444;background:#e8eef2}
.w3 span{font:bold 19px "Liberation Sans",sans-serif;color:#f4f4f4;-webkit-text-stroke:1px #444;margin-top:-4px}

/* app frame */
.app{position:relative;width:1902px;margin-left:7px}
.tabs{display:flex;align-items:flex-end;height:25px;padding-left:59px;background:#464646;border-top:2px solid #333;border-bottom:1px solid #2b2b2b;font-size:15px;color:#d2d2d2}
.tab{height:22px;line-height:21px;padding:0 12.400px}
.tab.on{width:51px;padding:0;text-align:center;color:#f2f2f2;background:#555;border:1px solid #2f2f2f;border-bottom:0;border-radius:2px 2px 0 0;margin-right:0}
.pill{display:flex;align-items:center;justify-content:center;width:17px;height:10px;margin:0 0 6px 32px;background:#ddd;border-radius:3px}
.arr.up{border-width:0 3.500px 4px;border-color:transparent transparent #333}
.pa{margin:0 0 8px 3px}

.ribbon{display:flex;height:123px;background:#555;font-size:15px;border-bottom:1px solid #333}
.panel{display:flex;flex-direction:column;flex:none;border-right:1px solid #3d3d3d}
.p-draw{width:265px}.p-modify{width:284px}.p-anno{width:195px}.p-layer{width:315px}.p-block{width:168px}.p-prop{width:306px}.p-group{width:84px}.p-util{width:95px}.p-clip{width:96px}.p-view{width:76px}
.rfill{flex:1;background:linear-gradient(90deg,#474747,#3b3b3b)}
.pbody{display:flex;height:100px;padding-top:3px;background:linear-gradient(#4e4e4e,#565656)}
.p-draw .pbody{padding-left:4px}.p-modify .pbody{padding-left:6px}.p-anno .pbody{padding-left:9px}.p-layer .pbody{padding-left:6px}.p-block .pbody{padding-left:4px}.p-prop .pbody{padding-left:5px}.p-group .pbody{padding-left:2px}.p-util .pbody{padding-left:5px}.p-clip .pbody{padding-left:4px}
.ptitle{position:relative;display:flex;align-items:center;justify-content:center;gap:8px;height:22px;background:#494949;font-size:15px;color:#e8e8e8}
.tprop{padding-right:12px}
.tview{padding-right:16px}
.corner{position:absolute;right:6px;top:7px;width:8px;height:8px}
.big{display:flex;flex-direction:column;align-items:center;flex:none;line-height:20px;color:#ececec}
.bi{width:40px;height:40px;margin:3px 0 5px}
.big .arr{margin-top:3px}
.big .l2{margin-top:0}
.w50{width:50px}.w56{width:56px}.w46{width:46px}.w58{width:58px}.w44{width:44px}.w48{width:48px}.w74{width:74px}.w75{width:75px}.w94{width:94px}
.col{display:flex;flex-direction:column;flex:none}
.tool{display:flex;align-items:center;height:31px;color:#ececec}
.tool span{margin-left:5px;white-space:nowrap}
.si{width:24px;height:24px}
.t1 .si{margin-left:4px}
.ml8{margin-left:8px}.ml10{margin-left:13px}.ml12{margin-left:11px}.ml14{margin-left:15px}
.cl{margin-left:3px;margin-top:2px}
.combo{position:relative;display:flex;align-items:center;height:27px;background:linear-gradient(#5e5e5e,#4a4a4a);border:1px solid #2d2d2d}
.combo .big-arr{position:absolute;right:2px;top:10px;border-width:5px 5px 0;border-color:#eee transparent transparent}
.lay{width:258px;padding-left:7px}
.cbulb{width:14px;height:20px}.csun{width:18px;height:18px;margin-left:8px}.clock{width:18px;height:20px;margin-left:5px}
.swatch{width:17px;height:18px;margin-left:8px;background:#fff;border:1px solid #222}
.swatch.lg{width:19px;height:21px;margin-left:14px;border:0;background:#f6f6f6}
.lay span{margin-left:7px;font:15px "Open Sans",sans-serif}
.irow{display:flex;align-items:center;gap:8px;height:31px;margin-top:2px;padding-left:4px;color:#ececec}
.irow + .irow{margin-top:0}
.irow span{margin-left:-3px;white-space:nowrap}
.xi{width:22px;height:22px}
.cb{margin-left:2px}
.cb .ml8{margin-left:8px}
.cb .tool span{margin-left:6px}
.cp{gap:3px;margin:3px 0 0 2px}
.prow{display:flex;align-items:center;gap:4px}
.pi{width:22px;height:22px}
.pc{width:224px;font:15px "Open Sans",sans-serif}
.pc span{margin-left:12px;color:#e8e8e8}
.ln{height:2px;background:#ccc;margin-left:9px}
.w74l{width:72px;margin-left:11px}.w80l{width:78px;margin-left:5px}
.pc .ln + span{margin-left:2px}
.pc .swatch + span{margin-left:12px}
.cg{width:29px}
.gbtn{display:flex;align-items:center;justify-content:center;width:29px;height:30px}
.gbtn.active{height:28px;margin-top:1px;background:#4d72a8;border:1px solid #2a4670}
.gu{margin-left:-1px}
.cc{margin-left:2px}
.cc .gbtn{height:32px}
.docstrip{height:36px;background:#373737;border-bottom:3px solid #5a5a5a}

/* canvas */
.canvas{position:relative;height:765px;overflow:hidden;background-color:#222932;background-image:linear-gradient(90deg,#353c4a 1px,transparent 1px),linear-gradient(#353c4a 1px,transparent 1px),linear-gradient(90deg,#272e38 1px,transparent 1px),linear-gradient(#272e38 1px,transparent 1px);background-size:57.33px 57.33px,57.33px 57.33px,11.47px 11.47px,11.47px 11.47px;background-position:16px 21px,16px 21px,4.530px 9.530px,4.530px 9.530px}
.drawing{position:absolute;left:0;top:0;width:1902px;height:764px}
.shp path,.shp circle{fill:none;stroke:#d2d4d6;stroke-width:1.100}
.shp .thick{stroke:#bfc2c4;stroke-width:1.500}
.gdots{fill:none;stroke:#b9b9b9;stroke-width:3;stroke-linecap:square}
.wdots{fill:none;stroke:#fff;stroke-width:2.600;stroke-linecap:square}
.dia{fill:#222932;stroke:#fff;stroke-width:1}
.tri{fill:#fff}
.ucs{fill:none;stroke:#f0f0f0;stroke-width:1.200}
.ucst{font:200 21px "Inter","Liberation Sans",sans-serif;fill:#e8e8e8;text-anchor:middle}
.vpctl{position:absolute;left:4px;top:4px;font:14px "Liberation Mono",monospace;color:#ddd}
.vpbtns{position:absolute;right:16px;top:12px;display:flex;align-items:center;gap:11px}
.vmin{width:13px;height:4px;margin-top:6px;background:#eee}
.vmax{width:11px;height:11px;border:2px solid #eee;box-shadow:2px -2px 0 -1px #ddd}
.vx{font:bold 13px/12px "Liberation Sans",sans-serif;color:#eee;margin-left:2px}
.viewcube{position:absolute;left:1737px;top:40px;width:150px;height:180px}
.vring{fill:none;stroke:#454b53;stroke-width:14}
.vface{fill:#a9abac}
.vinner{fill:#989ca1}
.vtop{font:32px "Noto Sans CJK SC",sans-serif;fill:#646a70;text-anchor:middle}
.vdir{font:19px "Noto Sans CJK SC",sans-serif;fill:#9a9ea2;text-anchor:middle}
.wcs{position:absolute;left:1782px;top:212px;display:flex;align-items:center;gap:5px;width:57px;height:20px;padding-left:5px;background:#83878f;border:2px solid #70747c;border-radius:6px;font:13px/16px "Liberation Sans",sans-serif;color:#474b52}
.wcsa{width:0;height:0;border:5px solid transparent;border-top:6px solid #a2a5ac;border-bottom:0}
.navbar{position:absolute;left:1857px;top:264px;display:flex;flex-direction:column;align-items:center;width:40px;height:259px;padding-top:20px;background:#5d6368;border-radius:3px}
.nv{width:30px;height:30px}
.navx{position:absolute;right:3px;top:2px;width:10px;height:10px;border-radius:50%;background:#4a5055}
.navd{position:absolute;right:3px;bottom:2px;width:10px;height:10px;border-radius:50%;background:#4a5055}
.narr{width:0;height:0;margin:7px 0;border:3px solid transparent;border-top:4px solid #42474c;border-bottom:0}
.n2{margin-bottom:1px}
.n3{margin-top:6px}
.n5{margin-top:7px}
.cmdhist{position:absolute;left:452px;top:690px;display:flex;flex-direction:column;align-items:flex-start;gap:1px;font:16px/19px "Noto Sans CJK SC",monospace;color:#e4e4e4}
.ch1,.ch2{height:19px;padding:0 2px;background:#5a5c5e;border-radius:2px;white-space:nowrap}
.ch1{width:46px}
.ch2{width:396px}
.mono{font:14.300px/19px "Liberation Mono",monospace;white-space:pre}
.cmdbar{position:absolute;left:382px;top:731px;display:flex;width:1138px;height:33px;border-radius:3px 3px 0 0;overflow:hidden}
.cmdh{display:flex;align-items:center;width:67px;background:linear-gradient(#6e6e6e,#3f3f3f)}
.grip{width:6px;height:26px;margin-left:5px;background-image:radial-gradient(#ddd 1px,transparent 1.300px);background-size:3px 4px}
.cx{margin-left:7px;font:bold 16px "Liberation Sans",sans-serif;color:#f0f0f0}
.wr{width:20px;height:20px;margin-left:11px}
.cmdi{position:relative;display:flex;align-items:center;flex:1;background:#fff;border-radius:0 3px 3px 0;padding-left:6px}
.hand{width:20px;height:24px}
.hd{margin-left:1px;border-top-color:#666}
.pan{margin-left:12px;font:bold 13px "Noto Sans","Liberation Sans",sans-serif;color:#000}
.cup{position:absolute;right:6px;top:14px;width:0;height:0;border:5px solid transparent;border-bottom:6px solid #111;border-top:0}

/* status */
.statusbar{position:relative;display:flex;height:36px;background:#3b3b3b}
.ltabs{display:flex;height:22px;padding-left:1px;font-size:14.500px;color:#a8a8a8}
.lt{display:flex;align-items:center;justify-content:center;width:65px;height:22px;margin-right:2px;background:#545454;border-radius:0 0 8px 8px}
.lt.act{width:76px;margin-right:1px;padding-left:12px;color:#fff;font-weight:700;background:linear-gradient(#6a6a6a,#8a8a8a)}
.lt.plus{width:27px;margin-left:6px;font:bold 17px "Liberation Sans",sans-serif;color:#ccc;border-radius:0 8px 8px 8px;background:#4a4a4a}
.stat{display:flex;gap:1px;margin:1px 0 0 auto;padding-right:2px;height:32px}
.sb{display:flex;align-items:center;justify-content:space-around;height:32px;border:1px solid #6a6a6a;border-bottom-width:2px;padding:0 3px}
.s36{width:36px;padding:0}.s80{width:80px}.s129{width:129px}.s137{width:137px}.s50{width:50px}.s31{width:31px}.s32{width:32px}.s6{width:6px;padding:0}.s28{width:28px;padding:0}.s34{width:34px;padding:0}
.st{width:22px;height:22px}
.model{font-size:15px;color:#fff;white-space:nowrap}
.scale{font:16px "Liberation Sans",sans-serif;color:#eee}
.watermark{position:absolute;right:6px;bottom:2px;font:15.800px/20px "Liberation Sans",sans-serif;color:rgba(235,235,235,.72);white-space:nowrap}

/* dialog */
.dialog{position:absolute;left:19px;top:145px;display:flex;flex-direction:column;width:680px;height:552px;padding:0 6px 8px 5px;background:linear-gradient(#39464f 0,#39464f 34px,#8e979d 40px,#c9cdd0 130px,#8a9096 160px,#293846 165px,#293846 100%);border:1px solid;border-color:#11181e #8d959c #b5bcc2;border-radius:6px 6px 2px 2px;box-shadow:0 0 4px rgba(0,0,0,.6)}
.dtitle{position:relative;display:flex;align-items:center;height:33px;flex:none;color:#111;background:linear-gradient(90deg,#a9aeb0,#8c9497 120px,#2f3d47 165px,#4a5c6a 190px,#48596a 300px,#2f3d4a 340px)}
.dlogo{width:18px;height:18px;margin-left:2px}
.dA{font:10px "Liberation Sans",sans-serif;fill:#d8344a}
.dname{margin-left:5px;font-size:15px;color:#111}
.dbtns{position:absolute;right:0;top:-1px;display:flex;height:25px;border:1px solid #2a3036;border-top:0;border-radius:0 0 5px 5px;overflow:hidden}
.db{display:flex;align-items:center;justify-content:center;height:100%}
.d1{width:36px;background:linear-gradient(#7a8288,#3f474d);border-right:1px solid #ccc}
.d1 i{width:15px;height:4px;margin-top:9px;background:#eee}
.d2{width:33px;background:linear-gradient(#7a8288,#3f474d);border-right:1px solid #ccc}
.d2 i{width:15px;height:13px;margin-top:-4px;border:2px solid #eee;background:#55606a}
.d3{width:58px;background:linear-gradient(#d06a55,#c0341c 55%,#9f2a18)}
.d3 span{font:bold 19px "Liberation Sans",sans-serif;color:#fff;-webkit-text-stroke:1px #444;margin-top:-3px}
.dclient{flex:1;padding:15px 18px 15px 21px;background:#f0f0f0;border:1px solid #222;color:#111;font:15px "Noto Sans CJK TC","Noto Sans CJK SC",sans-serif}
.dtabs{display:flex;align-items:flex-end;height:23px;margin-left:1px;font-size:14.600px}
.dtab{display:flex;align-items:center;justify-content:center;width:70px;height:20px;margin-top:3px;background:linear-gradient(#f2f2f2,#e0e0e0);border:1px solid #888;border-bottom:0}
.dtab.cur{width:75px;height:23px;background:#f0f0f0;border-left:0}
.dtab.cur em{padding:0 1px;line-height:18px;border:1px dotted #333}
.dpane{height:454px;padding:18px 13px 0 11px;border:1px solid #8a8a8a;background:#f0f0f0}
.group{position:relative;width:601px;border:1px solid #d6dfe6;border-radius:3px}
.g1{height:143px;padding-top:16px}
.g2{height:100px;margin-top:19px;padding-top:15px}
.legend{position:absolute;left:7px;top:-13px;padding:0 2px;line-height:20px;background:#f0f0f0}
.frow{display:flex;align-items:center;height:25px;white-space:nowrap}
.r33{margin-bottom:8px}.r37{margin-bottom:12px}.r34{margin-bottom:9px}
.fl{padding-bottom:5px;text-align:right}
.asc{font:12.500px "Liberation Mono",monospace}
.l254{width:259px}
.l204{width:209px;margin-right:5px}
.field{width:131px;height:25px;padding-left:3px;background:#fff;border:1px solid #dcdcdc;border-top-color:#b4b4b4;font:13px/23px "Liberation Mono",monospace;color:#111}
.field.off{background:#eee;border:1px solid #a9a9a9;color:#8a8a8a}
.chk{display:flex;align-items:center;margin-left:9px}
.c2{margin-left:10px}
.box{display:flex;align-items:center;justify-content:center;width:16px;height:16px;background:#e6e8ee;border:1px solid #8f8f8f}
.box svg{width:11px;height:13px}
.chk span{margin-left:7px;padding-bottom:3px}
.rwidget{position:absolute;left:1908px;top:325px;width:8px;height:59px;background:linear-gradient(#39424c 0,#39424c 30%,#e0a030 30%,#d9c24a 60%,#4fc0a0 62%,#5ab8c8 92%,#39424c 92%);border-radius:3px 0 0 3px}
```
